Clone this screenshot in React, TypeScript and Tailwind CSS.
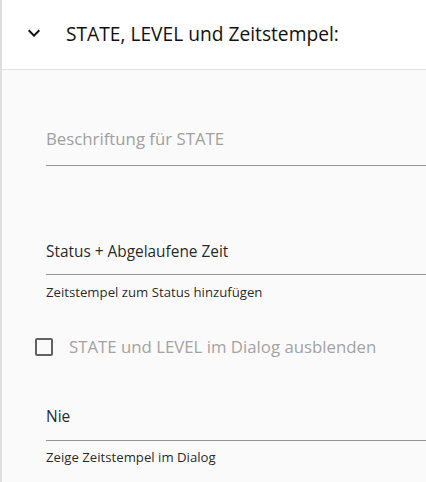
import React from "react";

export default function App() {
  return (
    <div
      className="w-[426px] h-[482px] overflow-hidden bg-[#fafafa] border-l-2 border-[#dedede] text-[rgba(0,0,0,0.87)]"
      style={{ fontFamily: '"Open Sans", "Noto Sans", sans-serif' }}
    >
      <div className="h-[70px] bg-white border-b border-[#e2e2e2] flex items-center pl-[20px]">
        <svg width="24" height="24" viewBox="0 0 24 24" className="shrink-0 mt-[-4px]">
          <path d="M16.59 8.59 12 13.17 7.41 8.59 6 10l6 6 6-6z" fill="#111" />
        </svg>
        <div className="ml-[20px] text-[19.2px] leading-[24px] text-[#111] mt-[-2px]">STATE, LEVEL und Zeitstempel:</div>
      </div>
      <div className="pl-[44px]">
        <div className="pt-[57px]">
          <div className="pb-[14px] border-b border-[#959595] text-[16.8px] leading-[24px] text-[#a0a0a0]">
            Beschriftung für STATE
          </div>
        </div>
        <div className="pt-[74px]">
          <div className="pb-[10px] border-b border-[#959595] text-[15.4px] leading-[24px]">
            Status + Abgelaufene Zeit
          </div>
          <div className="mt-[9px] text-[13.2px] leading-[16px]">Zeitstempel zum Status hinzufügen</div>
        </div>
        <div className="mt-[35px] flex items-center ml-[-11px] h-[24px]">
          <div className="w-[18px] h-[18px] border-2 border-[#616161] rounded-[2px] shrink-0" />
          <div className="ml-[16px] text-[16.8px] leading-[24px] text-[#a3a3a3]">
            STATE und LEVEL im Dialog ausblenden
          </div>
        </div>
        <div className="pt-[45px]">
          <div className="pb-[12px] border-b border-[#959595] text-[15.5px] leading-[24px]">Nie</div>
          <div className="mt-[8px] text-[13.2px] leading-[16px]">Zeige Zeitstempel im Dialog</div>
        </div>
      </div>
    </div>
  );
}
